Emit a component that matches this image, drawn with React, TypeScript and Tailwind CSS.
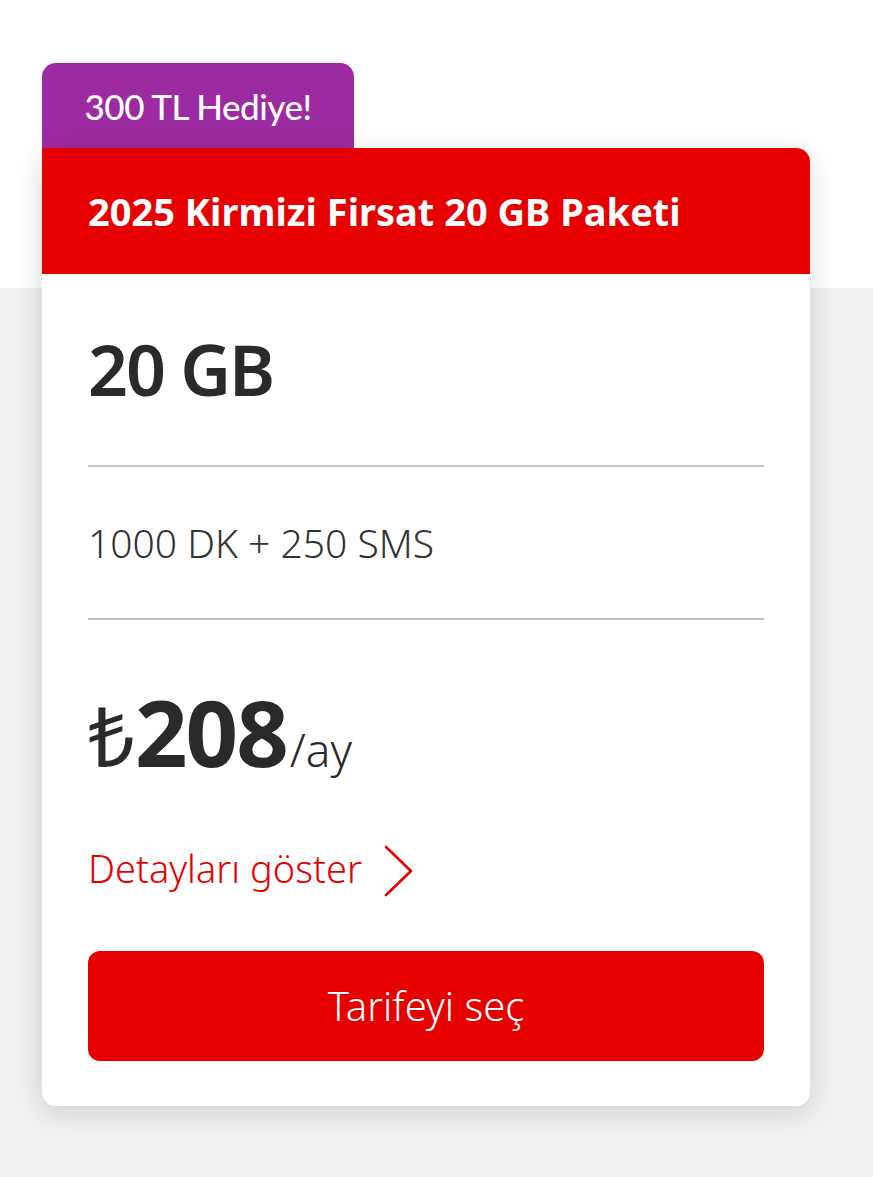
export default function App() {
  return (
    <div className="min-h-screen bg-[linear-gradient(to_bottom,#ffffff_288px,#f0f0f0_288px)] px-[42px] pt-[63px] pb-[70px] font-['Noto_Sans',sans-serif] text-[#2a2a2a]">
      <div className="w-[768px]">
        <div className="flex h-[85px] w-[312px] items-start justify-center rounded-t-[14px] bg-[#9c2aa0] pt-[17px]">
          <span className="font-['Lato',sans-serif] text-[35px] font-medium tracking-[-0.5px] text-white">
            300 TL Hediye!
          </span>
        </div>

        <div className="rounded-b-[14px] rounded-tr-[14px] bg-white shadow-[0_6px_28px_rgba(0,0,0,0.14)]">
          <div className="flex h-[126px] items-center rounded-tr-[14px] bg-[#e60000] px-[46px]">
            <h2 className="text-[38px] font-bold text-white">
              2025 Kirmizi Firsat 20 GB Paketi
            </h2>
          </div>

          <div className="px-[46px] pb-[45px]">
            <div className="pt-[50px] pb-[51px] text-[70px] font-semibold leading-[90px] tracking-[-2px]">
              20 GB
            </div>
            <div className="h-[2px] bg-[#c2c2c2]" />

            <div className="pt-[50px] pb-[49px] text-[39px] font-light leading-[52px] text-[#333333]">
              1000 DK + 250 SMS
            </div>
            <div className="h-[2px] bg-[#c2c2c2]" />

            <div className="flex items-baseline pt-[62px]">
              <span className="text-[82px] font-normal leading-[100px]">₺</span>
              <span className="text-[92px] font-bold leading-[100px] tracking-[-2px]">208</span>
              <span className="ml-[3px] text-[46px] font-light">/ay</span>
            </div>

            <button className="mt-[55px] flex items-center gap-[22px] text-[38px] font-light text-[#e60000]">
              Detayları göster
              <svg width="30" height="52" viewBox="0 0 30 52" fill="none" className="mt-[4px]">
                <polyline points="2,2 27,26 2,50" stroke="#e60000" strokeWidth="2.6" strokeLinecap="round" strokeLinejoin="round" />
              </svg>
            </button>

            <button className="mt-[54px] flex h-[110px] w-full items-center justify-center rounded-[12px] bg-[#e60000] text-[40px] font-light text-white">
              Tarifeyi seç
            </button>
          </div>
        </div>
      </div>
    </div>
  );
}
